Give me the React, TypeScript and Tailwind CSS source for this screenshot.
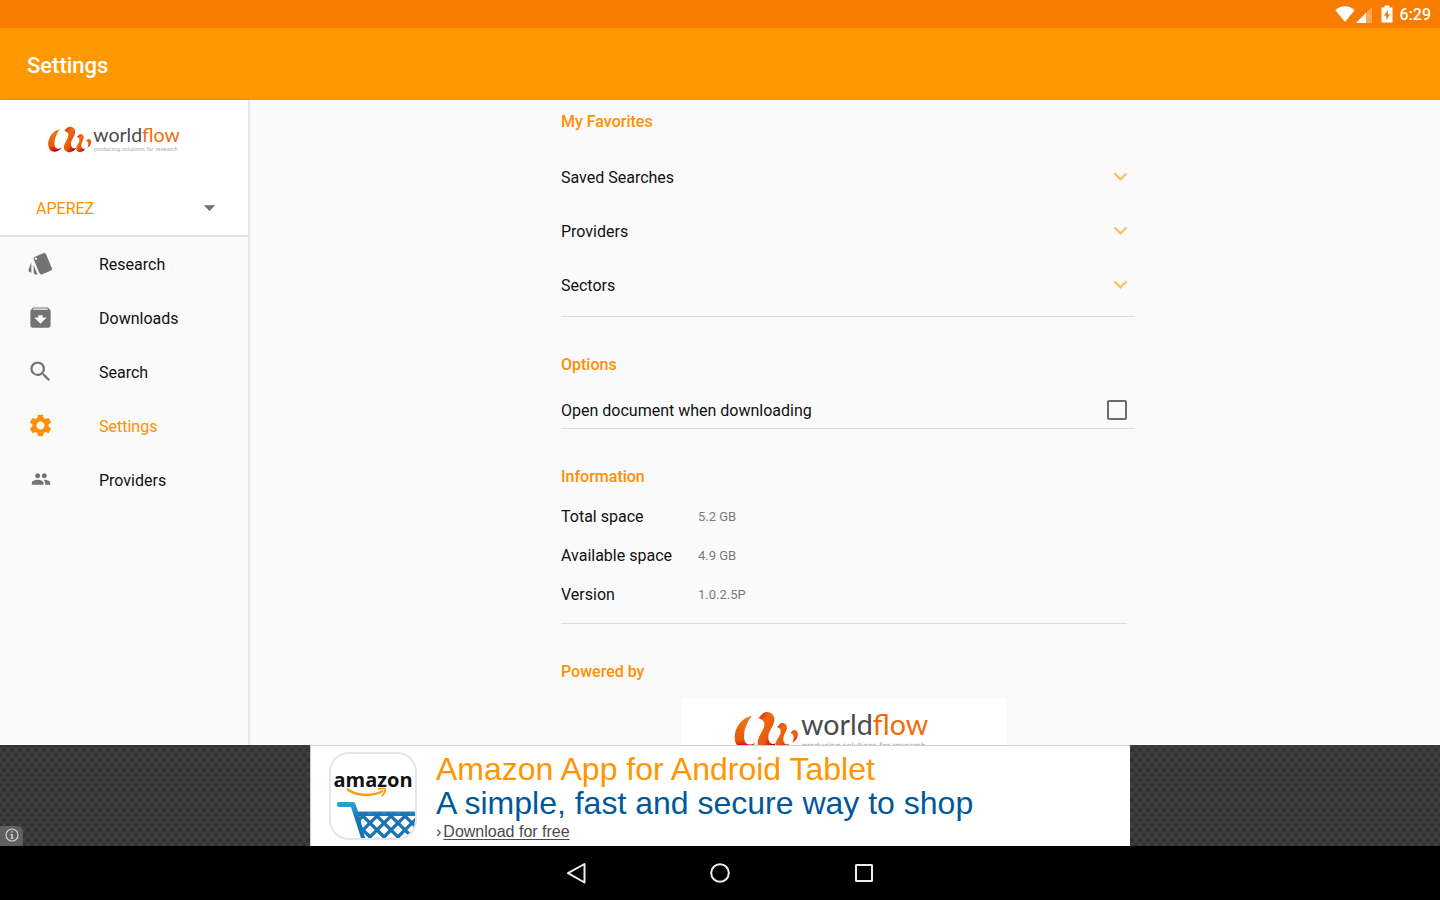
import { useState } from "react";
import type { IconType } from "react-icons";
import {
  MdArchive,
  MdArrowDropDown,
  MdExpandMore,
  MdPeople,
  MdSearch,
  MdSettings,
  MdStyle,
} from "react-icons/md";

const navItems: { label: string; icon: IconType; active?: boolean; small?: boolean }[] = [
  { label: "Research", icon: MdStyle },
  { label: "Downloads", icon: MdArchive },
  { label: "Search", icon: MdSearch },
  { label: "Settings", icon: MdSettings, active: true },
  { label: "Providers", icon: MdPeople, small: true },
];

const favorites = ["Saved Searches", "Providers", "Sectors"];

const information = [
  { label: "Total space", value: "5.2 GB" },
  { label: "Available space", value: "4.9 GB" },
  { label: "Version", value: "1.0.2.5P" },
];

function WorldflowLogo({ id, className }: { id: string; className: string }) {
  const fill = `url(#${id})`;
  return (
    <svg viewBox="0 0 600 150" className={className} role="img" aria-label="worldflow">
      <defs>
        <linearGradient id={id} x1="0" y1="0" x2="0.7" y2="1">
          <stop offset="0" stopColor="#d8160c" />
          <stop offset="0.35" stopColor="#ee6a10" />
          <stop offset="0.7" stopColor="#e8590c" />
          <stop offset="0.9" stopColor="#cf1b10" />
          <stop offset="1" stopColor="#5e0a08" />
        </linearGradient>
        <linearGradient id={`${id}-c`} x1="0.5" y1="0" x2="0.6" y2="1">
          <stop offset="0" stopColor="#ef7a14" />
          <stop offset="0.7" stopColor="#e65a0c" />
          <stop offset="0.9" stopColor="#d0160e" />
          <stop offset="1" stopColor="#7a0d08" />
        </linearGradient>
      </defs>
      <path
        d="M66 32C38 38 15 62 14 96C14 120 28 132 44 131C58 130 68 123 76 113C66 119 54 121 47 113C36 98 44 58 66 32Z"
        fill={`url(#${id}-c)`}
      />
      <path
        d="M84 39C92 36 94 22 110 21C126 21 135 34 133 47C131 64 115 78 115 96C115 112 123 121 138 115C130 128 116 135 103 133C88 131 80 119 84 105C88 90 102 74 103 60C104 49 98 43 84 39Z"
        fill={fill}
      />
      <path
        d="M140 66C147 64 148 54 157 54C167 54 173 63 170 73C167 84 159 92 160 104C161 116 167 122 178 117C170 130 158 135 149 132C139 129 135 119 139 109C143 98 152 90 152 80C152 72 149 68 140 66Z"
        fill={fill}
      />
      <path
        d="M180 84C186 82 187 75 194 75C203 76 206 87 202 97C199 105 193 110 187 113C191 105 192 98 190 92C188 87 185 85 180 84Z"
        fill={fill}
      />
      <text x="213" y="90" fontSize="86" fontFamily="Lato, sans-serif" fill="#4a4a4a">
        world<tspan fill="#ef6c0a">flow</tspan>
      </text>
      <text x="216" y="130" fontSize="23" fontFamily="'DejaVu Sans', sans-serif" fill="#a3a3a3">
        producing solutions for research
      </text>
    </svg>
  );
}

function StatusBar() {
  return (
    <div className="flex h-7 shrink-0 items-center justify-end bg-[#f77c00] pr-[9px] text-white">
      <svg viewBox="0 0 20 16" className="h-4 w-5" aria-hidden="true">
        <path d="M10 16L0.4 4.2C3 1.6 6.3 0.3 10 0.3S17 1.6 19.6 4.2Z" fill="currentColor" />
      </svg>
      <svg viewBox="0 0 17 17" className="ml-px h-[17px] w-[17px]" aria-hidden="true">
        <path d="M0 17L16 1V17Z" fill="currentColor" opacity="0.35" />
        <path d="M0 17L10 7V17Z" fill="currentColor" />
      </svg>
      <svg viewBox="0 0 12 18" className="ml-2 h-[18px] w-3" aria-hidden="true">
        <path
          d="M3.5 0.5H8.5V2.5H11.5V17.5H0.5V2.5H3.5ZM7 5L2.8 10.8H5.2V15L9.3 9.2H7Z"
          fill="currentColor"
          fillRule="evenodd"
        />
      </svg>
      <span className="ml-[7px] pt-0.5 text-base font-medium">6:29</span>
    </div>
  );
}

function Sidebar() {
  return (
    <aside className="z-10 flex w-62 shrink-0 flex-col bg-[#fafafa] shadow-[1px_0_3px_rgba(0,0,0,0.15)]">
      <div className="border-b-2 border-[#e4e4e4] bg-white pt-[22px] pb-[9px]">
        <WorldflowLogo id="logo-side" className="ml-[45px] h-[34px] w-[136px]" />
        <div className="relative mt-[35px] mr-[25px] ml-9 flex h-[35px] items-center">
          <select
            aria-label="Account"
            className="w-full appearance-none bg-transparent text-base text-[#ff8f00] outline-none"
          >
            <option>APEREZ</option>
          </select>
          <MdArrowDropDown className="pointer-events-none absolute right-0 mb-0.5 size-[27px] text-[#6f6f6f]" />
        </div>
      </div>
      <nav>
        <ul>
          {navItems.map(({ label, icon: Icon, active, small }) => (
            <li key={label}>
              <a
                href="#"
                aria-current={active ? "page" : undefined}
                className={`flex h-[54px] items-center pl-[27px] ${active ? "text-[#ff8f00]" : "text-[#111111]"}`}
              >
                <span
                  className={`mb-0.5 flex size-[27px] items-center justify-center ${active ? "text-[#ff8f00]" : "text-[#737373]"}`}
                >
                  <Icon className={small ? "size-5" : "size-[27px]"} />
                </span>
                <span className="ml-[45px] pt-0.5">{label}</span>
              </a>
            </li>
          ))}
        </ul>
      </nav>
    </aside>
  );
}

function SectionTitle({ children }: { children: string }) {
  return <h2 className="flex h-[42px] items-center pt-0.5 font-medium text-[#ff8f00]">{children}</h2>;
}

function SettingsPanel() {
  const [openDocument, setOpenDocument] = useState(false);
  return (
    <main className="flex min-w-0 flex-1 justify-center overflow-hidden bg-[#fafafa] pl-2">
      <div className="w-full max-w-[574px] text-[#111111]">
        <section className="border-b border-[#dcdcdc] pb-1">
          <SectionTitle>My Favorites</SectionTitle>
          <div className="mt-2">
            {favorites.map((label) => (
              <button
                key={label}
                type="button"
                className="flex h-[54px] w-full items-center justify-between text-left"
              >
                <span className="pt-0.5">{label}</span>
                <MdExpandMore className="mr-px mb-0.5 size-[27px] text-[#ffbd66]" />
              </button>
            ))}
          </div>
        </section>

        <section className="mt-[26px] border-b border-[#dcdcdc]">
          <SectionTitle>Options</SectionTitle>
          <label className="mt-2 flex h-[35px] items-center justify-between pr-2">
            Open document when downloading
            <input
              type="checkbox"
              checked={openDocument}
              onChange={(event) => setOpenDocument(event.target.checked)}
              className="mb-0.5 size-5 appearance-none rounded-[2px] border-2 border-[#6b6b6b] checked:bg-[#ff8f00]"
            />
          </label>
        </section>

        <section className="mt-[26px] mr-2 border-b border-[#dcdcdc] pb-[9px]">
          <SectionTitle>Information</SectionTitle>
          <dl>
            {information.map(({ label, value }) => (
              <div key={label} className="flex h-[39px] items-center">
                <dt className="w-[137px]">{label}</dt>
                <dd className="text-[13px] text-[#7a7a7a]">{value}</dd>
              </div>
            ))}
          </dl>
        </section>

        <section className="mt-[26px] mr-2">
          <SectionTitle>Powered by</SectionTitle>
          <div className="mx-auto mt-[7px] w-[326px] bg-white pt-[6px] pb-6">
            <WorldflowLogo id="logo-main" className="ml-[49px] h-[50px] w-[200px]" />
          </div>
        </section>
      </div>
    </main>
  );
}

function AmazonAppIcon() {
  return (
    <div className="size-[88px] shrink-0 overflow-hidden rounded-[20px] border-2 border-[#e6e6e6] bg-white">
      <svg viewBox="0 0 84 84" className="size-full" aria-hidden="true">
        <defs>
          <linearGradient id="cart" x1="0" y1="48" x2="0" y2="84" gradientUnits="userSpaceOnUse">
            <stop offset="0" stopColor="#2fa3de" />
            <stop offset="0.4" stopColor="#1b78b8" />
            <stop offset="1" stopColor="#1a6fae" />
          </linearGradient>
          <clipPath id="basket">
            <path d="M25 58H84V84H33Z" />
          </clipPath>
        </defs>
        <text
          x="42"
          y="33"
          textAnchor="middle"
          fontSize="20"
          fontWeight="700"
          fontFamily="'Open Sans', sans-serif"
          fill="#111111"
        >
          amazon
        </text>
        <path d="M16 35C25 42 41 43 52 37" fill="none" stroke="#ff9900" strokeWidth="2.4" />
        <path d="M47 35.5C50 34 53 34.500 54 35C54.5 37 53 40 51 42" fill="none" stroke="#ff9900" strokeWidth="1.8" />
        <path
          d="M7 48H22Q24 48 24.500 50L27 57.500H84V62H28.500L34 84H30L20 53H9Q6 53 6 50.500Q6 48 7 48Z"
          fill="url(#cart)"
        />
        <g clipPath="url(#basket)" stroke="#1a74b3" strokeWidth="3.2" fill="none">
          <path d="M14 58L40 84M28 58L54 84M42 58L68 84M56 58L82 84M70 58L96 84" />
          <path d="M36 58L10 84M50 58L24 84M64 58L38 84M78 58L52 84M92 58L66 84M106 58L80 84" />
        </g>
      </svg>
    </div>
  );
}

function AdBanner() {
  return (
    <div className="relative flex h-[101px] shrink-0 justify-center bg-[#404040] bg-[radial-gradient(circle,#323232_2px,transparent_3px),radial-gradient(circle,#323232_2px,transparent_3px)] bg-[size:8px_10px] bg-[position:0_0,4px_5px]">
      <a
        href="#"
        className="flex w-full max-w-[820px] items-center border-t border-l border-[#cfcfcf] bg-white pl-[18px] font-['Liberation_Sans',sans-serif]"
      >
        <AmazonAppIcon />
        <span className="ml-[19px] flex flex-col pt-1">
          <span className="text-[32px] leading-[34px] text-[#ff9500]">Amazon App for Android Tablet</span>
          <span className="text-[32px] leading-[34px] text-[#00589c]">A simple, fast and secure way to shop</span>
          <span className="flex items-center text-base leading-6 text-[#4a4a4a]">
            <span className="mr-0.5">›</span>
            <span className="underline underline-offset-2">Download for free</span>
          </span>
        </span>
      </a>
      <button
        type="button"
        aria-label="About this ad"
        className="absolute bottom-0 left-0 flex h-5 w-[23px] items-center justify-center rounded-tr-md bg-[#606060] pb-0.5 text-[#d0d0d0]"
      >
        <svg viewBox="0 0 14 14" className="size-3.5" aria-hidden="true">
          <circle cx="7" cy="7" r="6" fill="none" stroke="currentColor" strokeWidth="1.2" />
          <path d="M6.200 3.200H7.800V4.600H6.200ZM5.500 6H7.800V9.800H8.600V10.800H5.400V9.800H6.200V7H5.500Z" fill="currentColor" />
        </svg>
      </button>
    </div>
  );
}

function NavigationBar() {
  return (
    <div className="flex h-[54px] shrink-0 justify-center bg-black text-[#eeeeee]">
      <button type="button" aria-label="Back" className="flex w-36 items-center justify-center">
        <svg viewBox="0 0 24 24" className="size-6" aria-hidden="true">
          <path d="M20.500 3V21.500L4 12.200Z" fill="none" stroke="currentColor" strokeWidth="2" strokeLinejoin="round" />
        </svg>
      </button>
      <button type="button" aria-label="Home" className="flex w-36 items-center justify-center">
        <svg viewBox="0 0 24 24" className="size-6" aria-hidden="true">
          <circle cx="12" cy="12" r="8.800" fill="none" stroke="currentColor" strokeWidth="2" />
        </svg>
      </button>
      <button type="button" aria-label="Recent apps" className="flex w-36 items-center justify-center">
        <svg viewBox="0 0 24 24" className="size-6" aria-hidden="true">
          <rect x="4" y="4" width="16" height="16" rx="0.500" fill="none" stroke="currentColor" strokeWidth="2" />
        </svg>
      </button>
    </div>
  );
}

export default function App() {
  return (
    <div className="flex h-screen flex-col overflow-hidden bg-[#fafafa] font-[Roboto,sans-serif] text-base">
      <StatusBar />
      <header className="flex h-18 shrink-0 items-center bg-[#ff9800] px-[27px] pt-[3px]">
        <h1 className="text-[22px] font-medium text-white">Settings</h1>
      </header>
      <div className="flex min-h-0 flex-1">
        <Sidebar />
        <SettingsPanel />
      </div>
      <AdBanner />
      <NavigationBar />
    </div>
  );
}
